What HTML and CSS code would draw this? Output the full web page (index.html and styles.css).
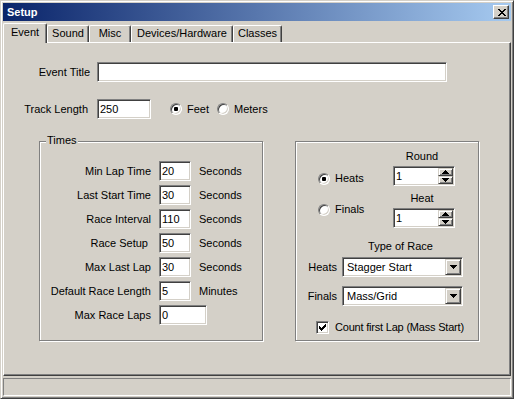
FILE: index.html
```html
<!DOCTYPE html>
<html>
<head>
  <meta charset="utf-8">
  <link rel="stylesheet" href="styles.css">
</head>
<body>
  <div class="window">
    <div class="titlebar">
      <span class="title">Setup</span>
      <div class="close-btn">
        <svg width="8" height="7" viewBox="0 0 8 7" shape-rendering="crispEdges"><path d="M0 0h2v1h-2z M6 0h2v1h-2z M1 1h2v1h-2z M5 1h2v1h-2z M2 2h4v1h-4z M3 3h2v1h-2z M2 4h4v1h-4z M1 5h2v1h-2z M5 5h2v1h-2z M0 6h2v1h-2z M6 6h2v1h-2z" fill="#000"/></svg>
      </div>
    </div>

    <div class="tabs">
      <div class="tab tab-active tab-event">Event</div>
      <div class="tab tab-sound">Sound</div>
      <div class="tab tab-misc">Misc</div>
      <div class="tab tab-devices">Devices/Hardware</div>
      <div class="tab tab-classes">Classes</div>
    </div>

    <div class="panel">
      <!-- event title -->
      <div class="row">
        <span class="row-label label-title">Event Title</span>
        <div class="field field-title"></div>
      </div>

      <!-- track length -->
      <div class="row row-track">
        <span class="row-label label-track">Track Length</span>
        <div class="field field-track">250</div>
        <span class="radio-opt opt-feet"><span class="radio checked"></span>Feet</span>
        <span class="radio-opt opt-meters"><span class="radio"></span>Meters</span>
      </div>

      <div class="groups">
        <!-- times -->
        <div class="group group-times">
          <span class="group-caption">Times</span>
          <div class="times-grid">
            <span class="times-label">Min Lap Time</span>
            <div class="field">20</div>
            <span>Seconds</span>

            <span class="times-label">Last Start Time</span>
            <div class="field">30</div>
            <span>Seconds</span>

            <span class="times-label">Race Interval</span>
            <div class="field">110</div>
            <span>Seconds</span>

            <span class="times-label">Race Setup&nbsp;</span>
            <div class="field">50</div>
            <span>Seconds</span>

            <span class="times-label">Max Last Lap</span>
            <div class="field">30</div>
            <span>Seconds</span>

            <span class="times-label">Default Race Length</span>
            <div class="field">5</div>
            <span>Minutes</span>

            <span class="times-label">Max Race Laps</span>
            <div class="field field-wide">0</div>
          </div>
        </div>

        <!-- race -->
        <div class="group group-race">
          <div class="race-top">
            <div class="race-radios">
              <span class="radio-opt"><span class="radio checked"></span>Heats</span>
              <span class="radio-opt"><span class="radio"></span>Finals</span>
            </div>
            <div class="race-spins">
              <div class="spin-label">Round</div>
              <div class="field spin">
                <span class="spin-value">1</span>
                <div class="spin-btns">
                  <div class="small-btn">
                    <svg width="7" height="4" viewBox="0 0 7 4" shape-rendering="crispEdges"><path d="M3 0h1v1h1v1h1v1h1v1H0V3h1V2h1V1h1z" fill="#000"/></svg>
                  </div>
                  <div class="small-btn">
                    <svg width="7" height="4" viewBox="0 0 7 4" shape-rendering="crispEdges"><path d="M0 0h7v1h-1v1h-1v1h-1v1H3V3H2V2H1V1H0z" fill="#000"/></svg>
                  </div>
                </div>
              </div>
              <div class="spin-label spin-label-heat">Heat</div>
              <div class="field spin">
                <span class="spin-value">1</span>
                <div class="spin-btns">
                  <div class="small-btn">
                    <svg width="7" height="4" viewBox="0 0 7 4" shape-rendering="crispEdges"><path d="M3 0h1v1h1v1h1v1h1v1H0V3h1V2h1V1h1z" fill="#000"/></svg>
                  </div>
                  <div class="small-btn">
                    <svg width="7" height="4" viewBox="0 0 7 4" shape-rendering="crispEdges"><path d="M0 0h7v1h-1v1h-1v1h-1v1H3V3H2V2H1V1H0z" fill="#000"/></svg>
                  </div>
                </div>
              </div>
            </div>
          </div>

          <div class="race-type">
            <span></span>
            <div class="type-title">Type of Race</div>

            <span class="type-label">Heats</span>
            <div class="field combo">
              <span class="combo-value">Stagger Start</span>
              <div class="small-btn combo-btn">
                <svg width="7" height="4" viewBox="0 0 7 4" shape-rendering="crispEdges"><path d="M0 0h7v1h-1v1h-1v1h-1v1H3V3H2V2H1V1H0z" fill="#000"/></svg>
              </div>
            </div>

            <span class="type-label">Finals</span>
            <div class="field combo combo-finals">
              <span class="combo-value">Mass/Grid</span>
              <div class="small-btn combo-btn">
                <svg width="7" height="4" viewBox="0 0 7 4" shape-rendering="crispEdges"><path d="M0 0h7v1h-1v1h-1v1h-1v1H3V3H2V2H1V1H0z" fill="#000"/></svg>
              </div>
            </div>
          </div>

          <div class="check-row">
            <span class="checkbox">
              <svg width="7" height="7" viewBox="0 0 7 7" shape-rendering="crispEdges"><path d="M6 0h1v1h-1z M5 1h2v1h-2z M0 2h1v1h-1z M4 2h3v1h-3z M0 3h2v1h-2z M3 3h3v1h-3z M0 4h5v1h-5z M1 5h3v1h-3z M2 6h1v1h-1z" fill="#000"/></svg>
            </span>
            <span class="check-text">Count first Lap (Mass Start)</span>
          </div>
        </div>
      </div>
    </div>

    <div class="statusbar"></div>
  </div>
</body>
</html>
```

FILE: styles.css
```css
* {
  box-sizing: border-box;
}

body {
  margin: 0;
  font-family: "Liberation Sans", Arial, sans-serif;
  font-size: 11px;
  line-height: 13px;
  color: #000;
  background: #d4d0c8;
}

.window {
  width: 514px;
  height: 399px;
  display: flex;
  flex-direction: column;
  padding: 2px;
  background: #d4d0c8;
  border: 1px solid;
  border-color: #d4d0c8 #404040 #404040 #d4d0c8;
  box-shadow: inset 1px 1px #fff, inset -1px -1px #808080;
}

/* title bar */
.titlebar {
  height: 18px;
  flex: none;
  display: flex;
  align-items: center;
  justify-content: space-between;
  padding: 0 2px;
  background: linear-gradient(to right, #0a246a, #a6caf0);
}

.title {
  padding-left: 2px;
  color: #fff;
  font-weight: bold;
}

.close-btn {
  width: 16px;
  height: 14px;
  padding: 3px 0 0 4px;
  background: #d4d0c8;
  border: 1px solid;
  border-color: #fff #404040 #404040 #fff;
  box-shadow: inset -1px -1px #808080;
}

.close-btn svg {
  display: block;
}

/* tabs */
.tabs {
  height: 21px;
  flex: none;
  display: flex;
  align-items: flex-end;
  position: relative;
  z-index: 1;
}

.tab {
  height: 17px;
  padding-top: 1px;
  text-align: center;
  background: #d4d0c8;
  border: 1px solid;
  border-bottom: none;
  border-color: #fff #404040 #fff #fff;
  border-radius: 2px 2px 0 0;
  box-shadow: inset -1px 0 #808080;
}

.tab-active {
  height: 20px;
  margin-bottom: -1px;
  padding-top: 2px;
}

.tab-event { width: 44px; }
.tab-sound { width: 42px; }
.tab-misc { width: 42px; }
.tab-devices { width: 102px; }
.tab-classes { width: 49px; }

/* tab panel */
.panel {
  flex: 1;
  padding: 19px 1px 1px 1px;
  border: 1px solid;
  border-color: #fff #404040 #404040 #fff;
  box-shadow: inset -1px -1px #808080;
}

.row {
  height: 20px;
  display: flex;
  align-items: center;
}

.row-track {
  margin-top: 17px;
}

.row-label {
  text-align: right;
}

.label-title {
  width: 85px;
  margin-right: 7px;
}

.label-track {
  width: 83px;
  margin-right: 9px;
}

.field {
  height: 20px;
  padding: 0 0 0 2px;
  line-height: 18px;
  background: #fff;
  border: 1px solid;
  border-color: #808080 #fff #fff #808080;
  box-shadow: inset 1px 1px #404040, inset -1px -1px #d4d0c8;
}

.field-title {
  width: 350px;
}

.field-track {
  width: 54px;
}

.radio-opt {
  display: inline-flex;
  align-items: center;
  gap: 5px;
  height: 13px;
}

.opt-feet {
  margin-left: 19px;
}

.opt-meters {
  margin-left: 8px;
}

.radio {
  width: 12px;
  height: 12px;
  display: flex;
  align-items: center;
  justify-content: center;
  border-radius: 50%;
  background: #fff;
  border: 1px solid;
  border-color: #808080 #fff #fff #808080;
  box-shadow: inset 1px 1px #404040, inset -1px -1px #d4d0c8;
}

.radio.checked::after {
  content: "";
  width: 4px;
  height: 4px;
  border-radius: 1px;
  background: #000;
}

/* group boxes */
.groups {
  display: flex;
  margin-top: 22px;
  padding-left: 34px;
}

.group {
  position: relative;
  height: 200px;
  border: 1px solid #808080;
  box-shadow: inset 1px 1px #fff, 1px 1px #fff;
}

.group-times {
  width: 224px;
}

.group-race {
  width: 184px;
  margin-left: 32px;
}

.group-caption {
  position: absolute;
  top: -8px;
  left: 6px;
  padding: 0 1px;
  background: #d4d0c8;
}

.times-grid {
  display: grid;
  grid-template-columns: 111px 32px auto;
  grid-auto-rows: 20px;
  column-gap: 8px;
  row-gap: 4px;
  align-items: center;
  padding-top: 19px;
}

.times-label {
  text-align: right;
}

.field-wide {
  grid-column: span 2;
  width: 48px;
}

/* race box */
.race-top {
  display: grid;
  grid-template-columns: 97px 62px;
}

.race-radios {
  display: flex;
  flex-direction: column;
  gap: 18px;
  padding: 30px 0 0 22px;
}

.race-spins {
  padding-top: 8px;
}

.spin-label {
  padding-right: 4px;
  text-align: center;
}

.spin-label-heat {
  margin-top: 6px;
}

.spin {
  display: flex;
  margin-top: 3px;
  padding: 1px;
}

.spin-value {
  flex: 1;
  padding-left: 1px;
  line-height: 16px;
}

.spin-btns {
  width: 15px;
  display: flex;
  flex-direction: column;
}

.small-btn {
  flex: 1;
  display: flex;
  align-items: center;
  justify-content: center;
  background: #d4d0c8;
  border: 1px solid;
  border-color: #d4d0c8 #404040 #404040 #d4d0c8;
  box-shadow: inset 1px 1px #fff, inset -1px -1px #808080;
}

.small-btn svg {
  display: block;
}

.race-type {
  display: grid;
  grid-template-columns: 41px 121px;
  column-gap: 5px;
  align-items: center;
  margin-top: 12px;
}

.type-title {
  width: 117px;
  margin-bottom: 4px;
  text-align: center;
}

.type-label {
  text-align: right;
}

.combo {
  display: flex;
  padding: 1px;
}

.combo-finals {
  margin-top: 9px;
}

.type-label:nth-of-type(3) {
  margin-top: 9px;
}

.combo-value {
  flex: 1;
  padding-left: 3px;
  line-height: 16px;
}

.combo-btn {
  flex: none;
  width: 16px;
}

.check-row {
  display: flex;
  align-items: center;
  gap: 6px;
  height: 13px;
  margin-top: 15px;
  padding-left: 20px;
}

.check-text {
  letter-spacing: -0.2px;
}

.checkbox {
  width: 13px;
  height: 13px;
  display: flex;
  align-items: center;
  justify-content: center;
  background: #fff;
  border: 1px solid;
  border-color: #808080 #fff #fff #808080;
  box-shadow: inset 1px 1px #404040, inset -1px -1px #d4d0c8;
}

.checkbox svg {
  display: block;
}

/* status bar */
.statusbar {
  height: 18px;
  flex: none;
  margin-top: 2px;
  border: 1px solid;
  border-color: #808080 #fff #fff #808080;
}
```
